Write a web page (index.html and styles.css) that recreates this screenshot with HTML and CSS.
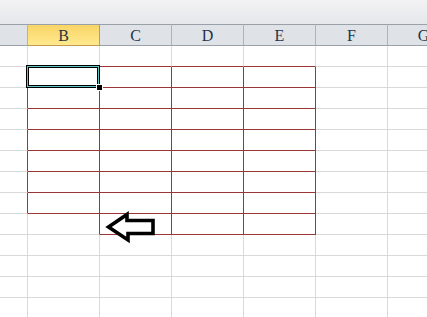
FILE: index.html
```html
<!DOCTYPE html>
<html>
<head>
<meta charset="utf-8">
<link rel="stylesheet" href="styles.css">
</head>
<body>
<div class="toolbar"></div>
<div class="sheet">
  <div class="hd corner"></div>
  <div class="hd active">B</div>
  <div class="hd">C</div>
  <div class="hd">D</div>
  <div class="hd">E</div>
  <div class="hd">F</div>
  <div class="hd">G</div>

  <!-- row 1 -->
  <div class="c"></div><div class="c rb"></div><div class="c rb"></div><div class="c rb"></div><div class="c rb"></div><div class="c"></div><div class="c"></div>
  <!-- row 2 -->
  <div class="c rr"></div><div class="c rr rb sel"><span class="selbox"></span><span class="handle"></span></div><div class="c rr rb"></div><div class="c rr rb"></div><div class="c rr rb"></div><div class="c"></div><div class="c"></div>
  <!-- rows 3-8 -->
  <div class="c rr"></div><div class="c rr rb"></div><div class="c rr rb"></div><div class="c rr rb"></div><div class="c rr rb"></div><div class="c"></div><div class="c"></div>
  <div class="c rr"></div><div class="c rr rb"></div><div class="c rr rb"></div><div class="c rr rb"></div><div class="c rr rb"></div><div class="c"></div><div class="c"></div>
  <div class="c rr"></div><div class="c rr rb"></div><div class="c rr rb"></div><div class="c rr rb"></div><div class="c rr rb"></div><div class="c"></div><div class="c"></div>
  <div class="c rr"></div><div class="c rr rb"></div><div class="c rr rb"></div><div class="c rr rb"></div><div class="c rr rb"></div><div class="c"></div><div class="c"></div>
  <div class="c rr"></div><div class="c rr rb"></div><div class="c rr rb"></div><div class="c rr rb"></div><div class="c rr rb"></div><div class="c"></div><div class="c"></div>
  <div class="c rr"></div><div class="c rr rb"></div><div class="c rr rb"></div><div class="c rr rb"></div><div class="c rr rb"></div><div class="c"></div><div class="c"></div>
  <!-- row 9 -->
  <div class="c"></div><div class="c rr"></div><div class="c rr rb arrowcell"><svg class="arrow" width="52" height="32" viewBox="0 0 52 32"><polygon points="3.5,14 22,1.5 22,7.5 48,7.5 48,20.5 23,20.5 23,27" fill="#fff" stroke="#000" stroke-width="3.6" stroke-linejoin="miter"/></svg></div><div class="c rr rb"></div><div class="c rr rb"></div><div class="c"></div><div class="c"></div>
  <!-- rows 10-13 -->
  <div class="c"></div><div class="c"></div><div class="c"></div><div class="c"></div><div class="c"></div><div class="c"></div><div class="c"></div>
  <div class="c"></div><div class="c"></div><div class="c"></div><div class="c"></div><div class="c"></div><div class="c"></div><div class="c"></div>
  <div class="c"></div><div class="c"></div><div class="c"></div><div class="c"></div><div class="c"></div><div class="c"></div><div class="c"></div>
  <div class="c"></div><div class="c"></div><div class="c"></div><div class="c"></div><div class="c"></div><div class="c"></div><div class="c"></div>
</div>
</body>
</html>
```

FILE: styles.css
```css
html, body {
  margin: 0;
  padding: 0;
  background: #fff;
  overflow: hidden;
  width: 427px;
  height: 317px;
}
.toolbar {
  height: 24px;
  background: linear-gradient(#f3f3f4, #e5e7ea);
}
.sheet {
  display: grid;
  grid-template-columns: 28px repeat(6, 72px);
  grid-template-rows: 22px;
  grid-auto-rows: 21px;
  width: 460px;
}
.hd {
  box-sizing: border-box;
  border-top: 1px solid #9aa0a7;
  border-bottom: 1px solid #9aa0a7;
  border-right: 1px solid #aeb3b9;
  background: #dfe3e8;
  font-family: "Liberation Serif", "DejaVu Serif", serif;
  font-size: 16px;
  color: #22344a;
  display: flex;
  align-items: center;
  justify-content: center;
  padding-top: 1px;
}
.hd.active {
  background: linear-gradient(#f9d466, #ffe98e);
  border-right-color: #c29a4e;
  border-bottom-color: #c29a4e;
}
.c {
  box-sizing: border-box;
  border-right: 1px solid #d9d9d9;
  border-bottom: 1px solid #d9d9d9;
}
.c.rr { border-right-color: #9a3636; }
.c.rb { border-bottom-color: #9a3636; }
.sel, .arrowcell { position: relative; }
.selbox {
  position: absolute;
  left: -2px;
  top: -2px;
  width: 74px;
  height: 23px;
  box-sizing: border-box;
  border: 1px solid #000;
  box-shadow: inset 0 0 0 1px #5fc4c4, inset 0 0 0 2px #000;
}
.handle {
  position: absolute;
  right: -3px;
  bottom: -3px;
  width: 5px;
  height: 5px;
  background: #000;
  outline: 1px solid #fff;
}
.arrow {
  position: absolute;
  left: 5px;
  top: -1px;
  overflow: visible;
}
```
